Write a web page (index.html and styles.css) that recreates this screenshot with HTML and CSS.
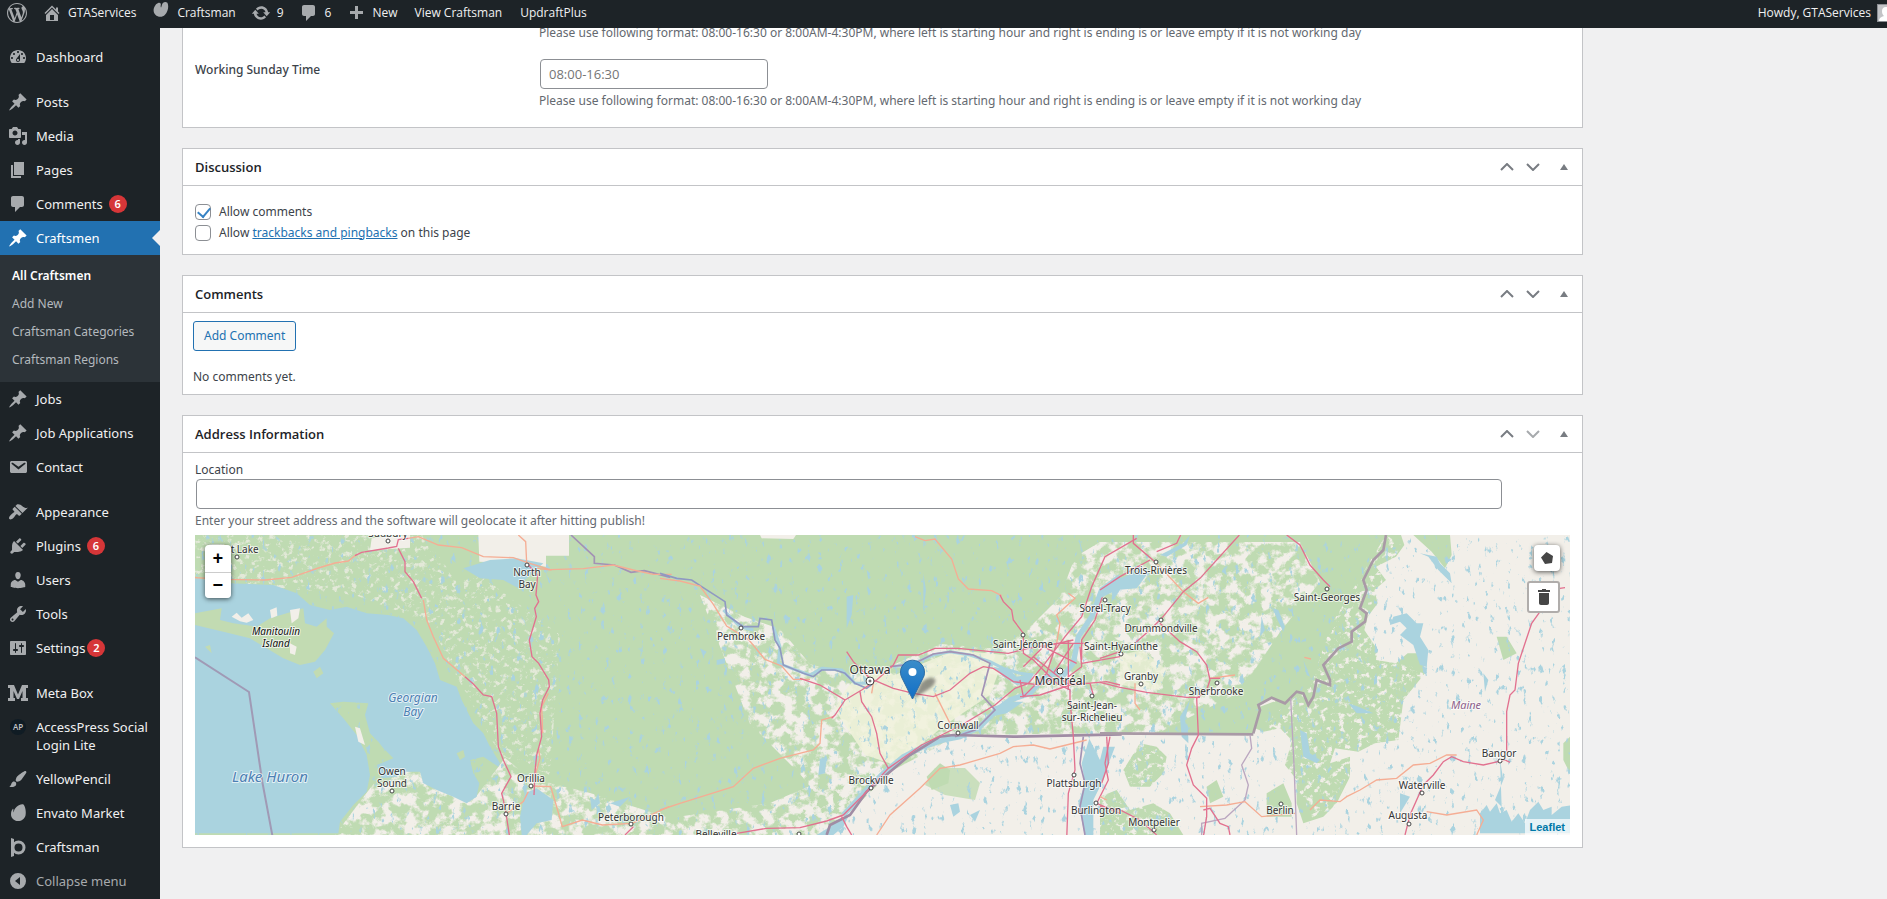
FILE: index.html
```html
<!DOCTYPE html>
<html lang="en">
<head>
<meta charset="utf-8">
<title>Edit Craftsman</title>
<link rel="stylesheet" href="styles.css">
</head>
<body>
<svg class="defs" aria-hidden="true">
  <symbol id="i-wp" viewBox="0 0 20 20"><path d="M20 10c0-5.51-4.49-10-10-10C4.48 0 0 4.49 0 10c0 5.52 4.48 10 10 10 5.51 0 10-4.48 10-10zM7.78 15.37L4.37 6.22c.55-.02 1.17-.08 1.17-.08.5-.06.44-1.13-.06-1.11 0 0-1.45.11-2.37.11-.18 0-.37 0-.58-.01C4.12 2.69 6.87 1.11 10 1.11c2.33 0 4.45.87 6.05 2.34-.68-.11-1.65.39-1.65 1.58 0 .74.45 1.36.9 2.1.35.61.55 1.36.55 2.46 0 1.49-1.4 5-1.4 5l-3.03-8.37c.54-.02.82-.17.82-.17.5-.05.44-1.25-.06-1.22 0 0-1.44.12-2.38.12-.87 0-2.33-.12-2.33-.12-.5-.03-.56 1.2-.06 1.22l.92.08 1.26 3.41zM17.41 10c.24-.64.74-1.87.43-4.25.7 1.29 1.05 2.71 1.05 4.25 0 3.29-1.73 6.24-4.4 7.78.97-2.59 1.94-5.2 2.92-7.78zM6.1 18.09C3.12 16.65 1.11 13.53 1.11 10c0-1.3.23-2.48.72-3.59C3.25 10.3 4.67 14.2 6.1 18.09zm4.03-6.63l2.58 6.98c-.86.29-1.76.45-2.71.45-.79 0-1.57-.11-2.29-.33.81-2.38 1.62-4.74 2.42-7.1z"/></symbol>
  <symbol id="i-home" viewBox="0 0 20 20"><path fill-rule="evenodd" d="M16 8.5l1.53 1.53-1.06 1.06L10 4.6l-6.47 6.49-1.06-1.06L10 2.5l4 4v-2h2v4zm-6-2.46l6 5.99V18H4v-5.97zM12 17v-5H8v5h4z"/></symbol>
  <symbol id="i-swirl" viewBox="0 0 20 20"><path d="M3 4c-3 4-3 9 0 12 3.500 3.500 9 3.300 12 0C19 12 20 5 18 1c-2.500-2-6-1-7 3-.4 1.500-1 3-1 3s-.8-1.300-.3-3C10.200 2 9 .3 7 1 5.500 1.500 4 2.600 3 4z"/></symbol>
  <symbol id="i-update" viewBox="0 0 20 20"><path d="M10.200 3.280c3.530 0 6.430 2.610 6.920 6h2.080l-3.500 4-3.500-4h2.320c-.45-1.970-2.210-3.450-4.320-3.450-1.450 0-2.730.71-3.540 1.780L4.950 5.660C6.230 4.200 8.110 3.280 10.200 3.280zm-.4 13.440c-3.520 0-6.430-2.610-6.920-6H.8l3.500-4c1.170 1.330 2.330 2.670 3.500 4H5.480c.45 1.970 2.210 3.450 4.320 3.450 1.450 0 2.730-.71 3.540-1.780l1.710 1.950c-1.280 1.460-3.150 2.380-5.250 2.380z"/></symbol>
  <symbol id="i-comment" viewBox="0 0 20 20"><path d="M5 2h9c1.100 0 2 .9 2 2v7c0 1.100-.9 2-2 2h-2l-5 5v-5H5c-1.100 0-2-.9-2-2V4c0-1.100.9-2 2-2z"/></symbol>
  <symbol id="i-plus" viewBox="0 0 20 20"><path d="M17 8v3h-5v5H9v-5H4V8h5V3h3v5z"/></symbol>
  <symbol id="i-dash" viewBox="0 0 20 20"><path fill-rule="evenodd" d="M3.760 16h12.480c1.100-1.370 1.760-3.110 1.760-5 0-4.420-3.580-8-8-8s-8 3.580-8 8c0 1.890.66 3.630 1.760 5zM10 4c.55 0 1 .45 1 1s-.45 1-1 1-1-.45-1-1 .45-1 1-1zM6 6c.55 0 1 .45 1 1s-.45 1-1 1-1-.45-1-1 .45-1 1-1zm8 0c.55 0 1 .45 1 1s-.45 1-1 1-1-.45-1-1 .45-1 1-1zm-5.370 5.550L12 7v6c0 1.100-.9 2-2 2s-2-.9-2-2c0-.57.24-1.080.63-1.450zM4 10c.55 0 1 .45 1 1s-.45 1-1 1-1-.45-1-1 .45-1 1-1zm12 0c.55 0 1 .45 1 1s-.45 1-1 1-1-.45-1-1 .45-1 1-1zm-5 3c0-.55-.45-1-1-1s-1 .45-1 1 .45 1 1 1 1-.45 1-1z"/></symbol>
  <symbol id="i-pin" viewBox="0 0 20 20"><path d="M10.440 3.020l1.820-1.820 6.360 6.350-1.830 1.820c-1.050-.68-2.480-.57-3.410.36l-.75.75c-.92.93-1.040 2.350-.35 3.410l-1.830 1.820-2.410-2.410-2.800 2.790c-.42.42-3.380 2.710-3.800 2.290s1.860-3.390 2.280-3.810l2.790-2.790L4.100 9.360l1.830-1.820c1.050.69 2.480.57 3.400-.36l.75-.75c.93-.92 1.050-2.350.36-3.410z"/></symbol>
  <symbol id="i-media" viewBox="0 0 20 20"><path fill-rule="evenodd" d="M13 11V4c0-.55-.45-1-1-1h-1.670L9 1H5L3.670 3H2c-.55 0-1 .45-1 1v7c0 .55.45 1 1 1h10c.55 0 1-.45 1-1zM7 4.500c1.380 0 2.500 1.120 2.500 2.500S8.380 9.500 7 9.500 4.500 8.380 4.500 7 5.620 4.500 7 4.500zM14 6h5v10.500c0 1.380-1.120 2.500-2.500 2.500S14 17.880 14 16.500s1.120-2.500 2.500-2.500c.17 0 .34.02.5.05V9h-3V6zm-4 8.050V13h2v3.500c0 1.380-1.120 2.500-2.500 2.500S7 17.880 7 16.500 8.120 14 9.500 14c.17 0 .34.02.5.05z"/></symbol>
  <symbol id="i-page" viewBox="0 0 20 20"><path d="M6 15V2h10v13H6zm-1 1h8v2H3V5h2v11z"/></symbol>
  <symbol id="i-mail" viewBox="0 0 20 20"><path d="M3.870 4h13.250C18.370 4 19 4.590 19 5.790v8.420c0 1.190-.63 1.790-1.880 1.790H3.870c-1.250 0-1.880-.6-1.880-1.790V5.790c0-1.200.63-1.790 1.880-1.790zm6.620 8.600l6.740-5.530c.24-.2.43-.66.13-1.070-.29-.41-.82-.42-1.170-.17l-5.700 3.860L4.800 5.830c-.35-.25-.88-.24-1.170.17-.3.41-.11.87.13 1.070z"/></symbol>
  <symbol id="i-brush" viewBox="0 0 20 20"><path d="M14.480 11.060L7.410 3.990l1.500-1.500c.5-.56 2.300-.47 3.510.32 1.210.8 1.430 1.280 2.910 2.100 1.180.64 2.450 1.260 4.450.85zm-.71.71L6.700 4.700 4.930 6.470c-.39.39-.39 1.020 0 1.410l1.060 1.060c.39.39.39 1.030 0 1.420-.6.6-1.430 1.110-2.210 1.690-.35.26-.7.53-1.010.84C1.430 14.230.4 16.080 1.400 17.070c.99 1 2.840-.03 4.180-1.360.31-.31.58-.66.85-1.020.57-.78 1.080-1.610 1.690-2.210.39-.39 1.020-.39 1.410 0l1.060 1.060c.39.39 1.020.39 1.410 0z"/></symbol>
  <symbol id="i-plug" viewBox="0 0 20 20"><path d="M13.110 4.360L9.870 7.600 8 5.730l3.240-3.240c.35-.34 1.050-.2 1.560.32.52.51.66 1.210.31 1.550zm-8 1.770l.91-1.120 9.010 9.010-1.190.84c-.71.71-2.630 1.160-3.820 1.160H6.140L4.900 17.260c-.59.59-1.540.59-2.120 0-.59-.58-.59-1.530 0-2.120l1.240-1.240v-3.880c0-1.130.4-3.190 1.090-3.890zm7.260 3.970l3.240-3.240c.34-.35 1.040-.21 1.550.31.52.51.66 1.210.31 1.550l-3.240 3.250z"/></symbol>
  <symbol id="i-user" viewBox="0 0 20 20"><path d="M10 9.250c-2.270 0-2.730-3.440-2.730-3.440C7 4.020 7.820 2 9.970 2c2.160 0 2.980 2.020 2.710 3.810 0 0-.41 3.440-2.680 3.440zm0 2.570L12.720 10c2.390 0 4.520 2.330 4.520 4.530v2.490s-3.650 1.130-7.240 1.130c-3.650 0-7.240-1.130-7.240-1.130v-2.490c0-2.250 1.940-4.480 4.470-4.480z"/></symbol>
  <symbol id="i-tool" viewBox="0 0 20 20"><path fill-rule="evenodd" d="M16.680 9.770c-1.340 1.340-3.300 1.670-4.950.99l-5.410 6.520c-.99.99-2.590.99-3.580 0s-.99-2.590 0-3.570l6.520-5.420c-.68-1.650-.35-3.610.99-4.950 1.280-1.280 3.120-1.620 4.720-1.060l-2.890 2.890 2.820 2.820 2.860-2.870c.53 1.580.18 3.390-1.080 4.650zM3.810 16.210c.4.39 1.040.39 1.430 0 .4-.4.4-1.040 0-1.430-.39-.4-1.030-.4-1.430 0-.39.39-.39 1.030 0 1.430z"/></symbol>
  <symbol id="i-sliders" viewBox="0 0 20 20"><path fill-rule="evenodd" d="M18 16V4c0-.55-.45-1-1-1H3c-.55 0-1 .45-1 1v12c0 .55.45 1 1 1h14c.55 0 1-.45 1-1zM8 11h1c.55 0 1 .45 1 1s-.45 1-1 1H8v1.500c0 .28-.22.5-.5.5s-.5-.22-.5-.5V13H6c-.55 0-1-.45-1-1s.45-1 1-1h1V5.500c0-.28.22-.5.5-.5s.5.22.5.5V11zm5-2h-1c-.55 0-1-.45-1-1s.45-1 1-1h1V5.500c0-.28.22-.5.5-.5s.5.22.5.5V7h1c.55 0 1 .45 1 1s-.45 1-1 1h-1v5.500c0 .28-.22.5-.5.5s-.5-.22-.5-.5V9z"/></symbol>
  <symbol id="i-meta" viewBox="0 0 20 20"><path d="M0 2h6l4 9.500L14 2h6v3h-2v10h2v3h-7v-3h1.500V8L11 16H9L5.500 8v7H7v3H0v-3h2V5H0z"/></symbol>
  <symbol id="i-paint" viewBox="0 0 20 20"><path d="M18.330 3.570s.27-.8-.31-1.360c-.53-.52-1.220-.24-1.220-.24-.61.3-5.760 3.470-7.670 5.570-.86.96-2.060 3.790-1.090 4.820.92.98 3.960-.17 4.790-1 2.060-2.060 5.210-7.170 5.500-7.790zM1.400 17.650c2.370-1.560 1.460-3.410 3.230-4.640.93-.65 2.220-.62 3.080.29.63.67.8 2.570-.16 3.460-1.570 1.450-4 1.550-6.150.89z"/></symbol>
  <symbol id="i-leaf" viewBox="0 0 20 20"><path d="M15.500 1.500c1.500 1.500 3 7 2 11-1 3.600-4 5.600-7.500 5.500-4-.1-7-3-7-6.800 0-2.500.8-4 1.700-5.200.3-.3.8-.1.7.4-.2 1.300-.1 2.400.3 3.200C6 4.500 12 .3 15.500 1.500z"/></symbol>
  <symbol id="i-b" viewBox="0 0 20 20"><path d="M3 1l3 1v17l-3 1z"/><circle cx="10.500" cy="10.500" r="5.500" fill="none" stroke="currentColor" stroke-width="3"/></symbol>
  <symbol id="i-collapse" viewBox="0 0 20 20"><path fill-rule="evenodd" d="M10 2a8 8 0 1 0 0 16 8 8 0 0 0 0-16zm2 4v8l-5-4z"/></symbol>
  <symbol id="i-up" viewBox="0 0 14 8"><path d="M1 7l6-6 6 6" fill="none" stroke="currentColor" stroke-width="2"/></symbol>
  <symbol id="i-down" viewBox="0 0 14 8"><path d="M1 1l6 6 6-6" fill="none" stroke="currentColor" stroke-width="2"/></symbol>
  <symbol id="i-tri" viewBox="0 0 8 6"><path d="M4 0l4 6H0z"/></symbol>
  <symbol id="i-penta" viewBox="0 0 12 12"><path d="M5.500 0L12 4l-1 7-7 1L0 5.500z"/></symbol>
  <symbol id="i-trash" viewBox="0 0 12 16"><path d="M4 0h4v1h4v2H0V1h4zM1 4h10v10c0 1.200-.8 2-2 2H3c-1.200 0-2-.8-2-2z"/></symbol>
</svg>

<header class="bar">
  <nav class="bar-left" aria-label="Toolbar">
    <a class="bar-item" href="#" aria-label="About WordPress"><svg class="icon"><use href="#i-wp"/></svg></a>
    <a class="bar-item" href="#"><svg class="icon"><use href="#i-home"/></svg>GTAServices</a>
    <a class="bar-item" href="#"><svg class="icon raised"><use href="#i-swirl"/></svg>Craftsman</a>
    <a class="bar-item" href="#"><svg class="icon"><use href="#i-update"/></svg>9</a>
    <a class="bar-item" href="#"><svg class="icon"><use href="#i-comment"/></svg>6</a>
    <a class="bar-item" href="#"><svg class="icon"><use href="#i-plus"/></svg>New</a>
    <a class="bar-item plain" href="#">View Craftsman</a>
    <a class="bar-item plain" href="#">UpdraftPlus</a>
  </nav>
  <a class="howdy" href="#">Howdy, GTAServices
    <span class="avatar"><svg viewBox="0 0 16 16" width="16" height="16"><path d="M8 2c3 0 4 2 4 4 0 3-1 4-2 5 3 1 5 2 5 5H1c0-3 2-4 5-5-1-1-2-2-2-5 0-2 1-4 4-4z" fill="#fff"/></svg></span>
  </a>
</header>

<div class="page">
  <nav class="menu" aria-label="Main menu">
    <a href="#"><svg class="icon"><use href="#i-dash"/></svg><span>Dashboard</span></a>
    <a class="gap" href="#"><svg class="icon"><use href="#i-pin"/></svg><span>Posts</span></a>
    <a href="#"><svg class="icon"><use href="#i-media"/></svg><span>Media</span></a>
    <a href="#"><svg class="icon"><use href="#i-page"/></svg><span>Pages</span></a>
    <a href="#"><svg class="icon"><use href="#i-comment"/></svg><span>Comments</span><b class="count">6</b></a>
    <a class="current" href="#"><svg class="icon"><use href="#i-pin"/></svg><span>Craftsmen</span></a>
    <div class="submenu">
      <a class="active" href="#">All Craftsmen</a>
      <a href="#">Add New</a>
      <a href="#">Craftsman Categories</a>
      <a href="#">Craftsman Regions</a>
    </div>
    <a href="#"><svg class="icon"><use href="#i-pin"/></svg><span>Jobs</span></a>
    <a href="#"><svg class="icon"><use href="#i-pin"/></svg><span>Job Applications</span></a>
    <a href="#"><svg class="icon"><use href="#i-mail"/></svg><span>Contact</span></a>
    <a class="gap" href="#"><svg class="icon"><use href="#i-brush"/></svg><span>Appearance</span></a>
    <a href="#"><svg class="icon"><use href="#i-plug"/></svg><span>Plugins</span><b class="count">6</b></a>
    <a href="#"><svg class="icon"><use href="#i-user"/></svg><span>Users</span></a>
    <a href="#"><svg class="icon"><use href="#i-tool"/></svg><span>Tools</span></a>
    <a href="#"><svg class="icon"><use href="#i-sliders"/></svg><span>Settings</span><b class="count close">2</b></a>
    <a class="gap" href="#"><svg class="icon"><use href="#i-meta"/></svg><span>Meta Box</span></a>
    <a href="#"><i class="ap">AP</i><span>AccessPress Social Login Lite</span></a>
    <a href="#"><svg class="icon"><use href="#i-paint"/></svg><span>YellowPencil</span></a>
    <a href="#"><svg class="icon"><use href="#i-leaf"/></svg><span>Envato Market</span></a>
    <a href="#"><svg class="icon"><use href="#i-b"/></svg><span>Craftsman</span></a>
    <button class="collapse" type="button"><svg class="icon"><use href="#i-collapse"/></svg><span>Collapse menu</span></button>
  </nav>

  <main class="content">
    <section class="box hours">
      <p class="hint">Please use following format: 08:00-16:30 or 8:00AM-4:30PM, where left is starting hour and right is ending is or leave empty if it is not working day</p>
      <label class="field-label" for="sunday">Working Sunday Time</label>
      <div class="field">
        <input class="text short" id="sunday" type="text" placeholder="08:00-16:30">
        <p class="hint">Please use following format: 08:00-16:30 or 8:00AM-4:30PM, where left is starting hour and right is ending is or leave empty if it is not working day</p>
      </div>
    </section>

    <section class="box">
      <div class="box-head"><h2>Discussion</h2><div class="handles">
        <button type="button" aria-label="Move up"><svg class="chev"><use href="#i-up"/></svg></button>
        <button type="button" aria-label="Move down"><svg class="chev"><use href="#i-down"/></svg></button>
        <button class="toggle" type="button" aria-label="Toggle panel"><svg class="tri"><use href="#i-tri"/></svg></button></div></div>
      <div class="discussion">
        <div class="check"><input type="checkbox" id="c1" checked><label for="c1">Allow comments</label></div>
        <div class="check"><input type="checkbox" id="c2"><label for="c2">Allow <a href="#">trackbacks and pingbacks</a> on this page</label></div>
      </div>
    </section>

    <section class="box">
      <div class="box-head"><h2>Comments</h2><div class="handles">
        <button type="button" aria-label="Move up"><svg class="chev"><use href="#i-up"/></svg></button>
        <button type="button" aria-label="Move down"><svg class="chev"><use href="#i-down"/></svg></button>
        <button class="toggle" type="button" aria-label="Toggle panel"><svg class="tri"><use href="#i-tri"/></svg></button></div></div>
      <div class="comments">
        <button class="add" type="button">Add Comment</button>
        <p>No comments yet.</p>
      </div>
    </section>

    <section class="box">
      <div class="box-head"><h2>Address Information</h2><div class="handles">
        <button type="button" aria-label="Move up"><svg class="chev"><use href="#i-up"/></svg></button>
        <button type="button" aria-label="Move down" disabled><svg class="chev"><use href="#i-down"/></svg></button>
        <button class="toggle" type="button" aria-label="Toggle panel"><svg class="tri"><use href="#i-tri"/></svg></button></div></div>
      <div class="address">
        <label for="loc">Location</label>
        <input class="text long" id="loc" type="text">
        <p class="hint">Enter your street address and the software will geolocate it after hitting publish!</p>
        <div class="map">
          <svg class="map-canvas" viewBox="0 0 1375 300" preserveAspectRatio="xMidYMid slice" role="img" aria-label="Map of eastern Ontario, southern Quebec and Maine">
            <defs>
              <filter id="cream" x="0" y="0" width="100%" height="100%" color-interpolation-filters="sRGB"><feTurbulence type="fractalNoise" baseFrequency=".09 .1" numOctaves="6" seed="4"/><feColorMatrix values="0 0 0 0 .949  0 0 0 0 .937  0 0 0 0 .914  6 0 0 0 -2.600"/></filter>
              <filter id="light" x="0" y="0" width="100%" height="100%" color-interpolation-filters="sRGB"><feTurbulence type="fractalNoise" baseFrequency=".16 .18" numOctaves="5" seed="9"/><feColorMatrix values="0 0 0 0 .949  0 0 0 0 .937  0 0 0 0 .914  6 0 0 0 -3.300"/></filter>
              <filter id="water" x="0" y="0" width="100%" height="100%" color-interpolation-filters="sRGB"><feTurbulence type="fractalNoise" baseFrequency=".18 .1" numOctaves="4" seed="33"/><feColorMatrix values="0 0 0 0 .667  0 0 0 0 .827  0 0 0 0 .875  9 0 0 0 -5.900"/></filter>
              <clipPath id="valley"><path d="M505 60l45 22 35 12 30 35 35 10 50-10 45-20 60 5 30-22 30-30 15-40 25-15 200 0 20 40-40 50-40 60-80 40 10 35-30 30H770l-75 40-50 57H480l-10-20 60-25 50-20 45-30-20-25-50-50z"/></clipPath>
              <clipPath id="south"><path d="M140 300l30-40 20-26 40 4 50 25 30-40 25 20 60 15 80 25 100-15 70-30 60 0-60 62z"/></clipPath>
              <clipPath id="greens"><path d="M905 200l70 0 10 50-20 50-70 0zM1191 0l15 10-30 60 20 50 70 40-30 50-50 10-60 80-30-60-30-50 50-40 20-60z"/></clipPath>
              <clipPath id="north"><path d="M0 0h230l40 60-30 30-80-30L0 45zM225 60l60-20 80 60-10 140-50-20-55-100z"/></clipPath>
            </defs>
            <rect width="1375" height="300" fill="#bfdbb2"/>
            <g clip-path="url(#north)" opacity=".7"><rect width="1375" height="300" filter="url(#light)"/></g>
            <g clip-path="url(#valley)"><rect width="1375" height="300" filter="url(#cream)"/></g>
            <g clip-path="url(#south)"><rect width="1375" height="300" filter="url(#cream)"/></g>
            <path d="M640 175q20-50 60-35l60-25 50 5-15 40-45 30-50 40-30-10z" fill="#f1f2dc" opacity=".85"/>
            <path d="M925 120l22-5 25 20-8 20-39-5z" fill="#f1f2dc" opacity=".7"/>

            <g transform="translate(905 -5) scale(.333333)">
              <path d="M858 15l-8 45-30 30-30 60 10 30-20 55 20 15-5 25-40 30v30l-40 20-45 50 20 45v15l-40-15-10 50-15 25-15-35-20-5-35 35-40-17-40 22 5 15-20 70H0L-420 615L-620 720L-760 855L-820 920H1425V15z" fill="#f2efe9"/>
              <path d="M858 15h45l10 30-25 35-60 30 30 40-35 30 10 40-30 40-10 40 40 60-5 30 60 10 35-30 40 0 12 60-65 80-15 120-70 10-50 25-70-10-20 60-40 30-50 10-40-50 20-70-20-60-30-60 40-100 55-60 40-20v-30l40-30 5-25-20-15 20-55-10-30 30-60 30-30z" fill="#bfdbb2"/>
              <path d="M480 530l40-15 50 10v100l-30-30-50 10-25-10zM590 690l60-20 40 30 60-20v60l-40 80-40 40-60 20-20-60zM500 790l50-30 25 60v40h-75zM940 15h110l5 60-20 40-40-50zM1190 320l30 0 30 50-40 20zM1410 620l-20 20 0 50 20 40zM120 640l50 10 30 30-10 50-40 40-60 0-20-50zM0 800l50-20 40 60 70-20 50 30 40 65H0zM320 770l30-20 20 50-40 20z" fill="#bfdbb2"/>
            </g>
            <g clip-path="url(#greens)"><rect width="1375" height="300" filter="url(#light)"/></g>
            <path d="M730 250l10-17 30 0 15 15-5 17-30-5z" fill="#bfdbb2" opacity=".8"/>
            <rect width="1375" height="300" filter="url(#water)"/>

            <g transform="translate(-5 -5) scale(.333333)">
              <path d="M865 15h272v62h-69v33l-70-10-130-5zM545 25l115-10v38l-120 8z" fill="#f2efe9"/>
              <path d="M15 145l105 15 130 5 70 25 40 35 60 15 50-10 60 20 65 5 45 10 40 35 30 50 25 50 15 50 50 20 15 40 35 70 30 30 20 40 30 50-5 10-45-30-40 10 10 40 18 30-8 40-30 20-40-20-50-20-40-20-10-35-50 0-20 15-45 5-15-40 50-20-30-30-15-20-25-25-15-55 10-35-75-5-40 5 40 45 40 50 30 60 10 60-10 50-40 40-40 50-5 35H15z" fill="#aad3df"/>
              <path d="M15 250l80-15-5 35 40 10 70 10 40-25 50-15 50-15 5 45 35 10 30-25v25l22 20-27 50-30 35-45 10-50-20-50-30-50-30-80-20-85-20zM370 425l20-15 10 20-20 15zM800 670l20-10 5 20-15 10zM45 350l15-5 5 25z" fill="#c2dbb2"/>
              <path d="M125 260l15-12 15 15 20-13 15 20-20 8-20-4zM240 240l20-8 2 25-18 8zM300 240l30-5-5 30-20 15zM300 340l20 10-5 25-15-5zM495 590l15 5 15 50-20-10z" fill="#f2efe9"/>
              <path d="M820 115l80-25 80-5 80 15-55 50-20 25-45-25-70-5zM1005 790l35-15 50 35-5 60-45 10-30 35h-15l-5-55zM1200 800l15 10 10-20 5 30-25 20zM1260 820l60-20-30 30z" fill="#aad3df"/>
              <path d="M15 382l162 104 40 270 30 160" fill="none" stroke="#a09ab5" stroke-width="6"/>
              <path d="M1143 15l70 65 0 20 60 5 50 22 40-5 78 20" fill="none" stroke="#a392b5" stroke-width="5"/>
              <g class="trunk"><path d="M15 143l90 5 120 2 80-8 80-28 50-15 40-6 25-20M655 25l30-5 60 25 70 8 65 27 90 3 40 14 70 22 100-3 90-11 60 15 60 13 55 0M700 210l10 60 20 50 30 65 65 55M985 15l22 20 3 65M1040 115l45 5M1075 490l-20 40 3 80M1045 655l5 30-20 70M1022 768l60 2 15 50 20 70 60-20 60 15 90-5 110-50M1015 785l-15 30-50 35"/></g>
              <g class="road"><path d="M495 77l20-10 80-13 25-5 5-20 30-4M625 55l20 40v30l25 30 25 50M825 440l25 22 30 33 25 5 15 50 5 100 15 40 23 50-28 50 5 20 8 40 10 65M1015 105l28 30-5 60 8 20-12 20 5 25-15 50-6 20 8 50 20 20 30 50 2 20-20 40-8 40 5 70-15 55-5 50-3 70M1305 915l25-25"/></g>
            </g>
            <g transform="translate(465 -5) scale(.333333)">
              <path d="M300 15h108l-8 12-95-2z" fill="#f2efe9"/>
              <path d="M190 240l50 50 40 10M340 290l20 60-5 50 40 15 55 20 35-20 60 5 40 40 40 0M700 410l60-10 60-25 50-10 60 10 60 20 40 20 50 15 40 5" class="creek"/>
              <path d="M550 855l60-65 60-60 60-50 60-30 60-20 50-10 60-30 50-50 40-30 60-20 40-45 50-20M1190 460l50-60 15-80 40-60 30-80 55-40" class="river"/>
              <path d="M1000 410l50 10 20 20 50-10-10 30-40 5-40-25zM1000 530l50-15 40 0-50 35-50 10zM510 890l60-40-20 40-30 25h-50zM1270 590l20 30-25 80 10 60-20 60 20 100h25l0-110 30-60 20-60 15-40h-35l-10 40zM1350 160l30-20v40l-20 30z" fill="#aad3df"/>
              <g fill="#aad3df"><path d="M120 355l20 10-10 15zM170 390l25-5 0 15-25 5zM560 200l20-5-5 60-15 40zM620 120l10 10-5 20zM790 130l8 50-8 70zM480 690l20-10-5 50-20 5zM870 825l25-5 5 25-20 15zM930 855l30-15-15 35z"/></g>
              <path d="M0 130l50 15 45 5 30 20 70 45 5 40 50 35 45 0 5-25 35 5 10 60 15 25 10 50 60 25 30 10 25-20 40 0 30 10 30 30 35 15 20-15" fill="none" stroke="#8f99c2" stroke-width="5"/>
              <path d="M690 410l70-8 60-30 50-7 70 10 50 25-25 95 40 45-60 60-60 20M1270 620l-10 80 15 60-15 70 15 85" fill="none" stroke="#a392b5" stroke-width="5"/>
              <path d="M500 915l10-30 60-30 50-70 70-60 60-50 90-55 40-5 180 5 325-7" fill="none" stroke="#a08ca4" stroke-width="8"/>
              <path d="M800 740l40-40 30 20-5 40-50 20z" fill="#bfdbb2"/>
              <g class="trunk"><path d="M0 145l60 8 60 15 40 55 40 65 65 40 50 60 50 20 35 40h50M520 560l-35 10-5 70-20 20-100 25-80 30-60 55-160 50-60 20M640 460l-5 30M765 20l30 12 30-5 50 60 20 60 30 30 70 5 30 15M825 490l45 90M650 915l40-60 90-80 60-60 60-10 120-35 40-20 60-5 50 12 110-27M1190 340l10-60-10-25 55-50-20-15"/></g>
              <g class="road"><path d="M420 445l60 20 75 45-30 45-10 10M555 510l50-30 45-30 50-45 15-30 60 0 50-20h70l150 15 60-15 85-15h90M560 365l20 30 50 50 70 30 60 15 60 10 50-20 60-50 40-20 30 5 60 40 80 10 40-20M600 485l5 30 30 45 15 50 10 60 25 45M550 855l60-60 75-80 100-70 120-60 100-60 60-50 40-15 50-60 60-80 50-60 30-90 40-90 95-55M230 910l90-15 100-2 80-20 50-18M545 860l15 30 15 25M1020 195l10 20 25 25 5 30 30 40M1090 320l0 50 30 20 70 70 40 20 0 30 10 110 5 100-20 70-5 140M1090 410l60-60 90-20M1120 380l100 80 60 0 60-5 40 10M1150 350l100 50M1180 430l60-90M1225 330v150M1260 350l5 60-40 30M1080 500l60-5 90-30 50-5M1080 450l10 50 70-70 30-90M1265 400l115-20M1265 390l0-60 40-60 25-80M1290 460l10 35M1350 620l-15 80 10 50-35 70 70 30"/></g>
            </g>
            <g transform="translate(905 -5) scale(.333333)">
              <path d="M50 150l70-30 20 15-30 40-60 5-50 25v-20zM180 75l70-35 20-25-10 30-60 35zM245 620l-5-60 30-50-15 60 10 50v20zM520 235l15 5 20 50-5 15-20-40zM485 260l10 40-15 20zM610 390l20 50-10-5zM745 520l30 10 45 20-50 0zM880 260l40-10 30 30 20 0-10 40 25 40-5 50-20-5-20-60-40-30 20-20-20-20-30 10zM960 70l25 10 30 40 40 40-5-30-30-30-10-20zM600 600l20 10 10 60 30 20-10 10-40-20zM1140 850l20-25 10 20 20-25 10 30 20-10 15 35 20-25 20 30 15-40 25-25 15 25 25-10 0 25 30-25 40-5v85h-285zM1200 690l10 60-25 60 20 20zM1150 430l15 20-10 35zM900 790l30 10-30 50z" fill="#aad3df"/>
              <path d="M0 610l460 3M858 15l-8 45-30 30-30 60 10 30-20 55 20 15-5 25-40 30v30l-40 20-45 50 20 45v15l-40-15-10 50-15 25-15-35-20-5-35 35-40-17-40 22 5 15-20 70" fill="none" stroke="#a99aa6" stroke-width="8"/>
              <path d="M572 505l10 200 8 210M450 615l5 40-30 50 20 60-10 45-60 55-70 15v35" fill="none" stroke="#bba7c0" stroke-width="4"/>
              <g class="trunk"><path d="M170 100l80 85 45 35 30-18M105 460v60l15 20M330 445l75-10M613 382l20 5M0 800l20 10M300 830l80-5 55-10 50 45 100-10M630 840l30-30 60 5 20-15 40-20 50-30 60-5 50-40 50-5 50-25h30M980 845l60 10 90-15 20 30-20 45"/></g>
              <g class="road"><path d="M0 180l60-40 90-50M100 15v25l70 60M170 65l60-25 12-25M418 15l-118 130-50 40-65 80-30 30-50 45M180 280l60 55 50 30 30 40 10 45-10 30-30 25 5 110-20 40-15 50 20 60 40 40 0 55-10 60M0 385l60-20M0 457l60 15 80 15 120 15 40 0M560 15l40 30 30 60 40 45 20 20M330 445h30M20 620l5 80-20 60M0 830l60 10 60 30 50 45M310 840l20-5 30 45 25 10 5 25M915 915l15-60 40-90 30-30 30-40 25-15 35 15 60 10 65-15 15 7M1220 665v-120l10-50 15-15 10-80 20-60 20-60 25-35 60-70 15-2"/></g>
            </g>

            <g class="dots">
              <circle cx="42" cy="22" r="2"/><circle cx="193" cy="6" r="2"/><circle cx="332" cy="30" r="2"/><circle cx="197" cy="256" r="2"/><circle cx="336" cy="251" r="2"/><circle cx="311" cy="279" r="2"/><circle cx="436" cy="289" r="2"/><circle cx="546" cy="93" r="2"/><circle cx="604" cy="299" r="2"/><circle cx="676" cy="253" r="2"/><circle cx="763" cy="198" r="2"/><circle cx="828" cy="100" r="2"/><circle cx="865" cy="136" r="3"/><circle cx="897" cy="161" r="2"/><circle cx="879" cy="240" r="2"/><circle cx="901" cy="268" r="2"/><circle cx="910" cy="65" r="2"/><circle cx="926" cy="119" r="2"/><circle cx="961" cy="27" r="2"/><circle cx="966" cy="85" r="2"/><circle cx="946" cy="149" r="2"/><circle cx="1022" cy="148" r="2"/><circle cx="1132" cy="54" r="2"/><circle cx="1305" cy="226" r="2"/><circle cx="1227" cy="258" r="2"/><circle cx="1214" cy="289" r="2"/><circle cx="1086" cy="269" r="2"/><circle cx="959" cy="295" r="2"/><circle cx="675" cy="146" r="4"/><circle cx="675" cy="146" r="1"/>
            </g>
            <g class="names">
              <text x="40" y="18">Elliot Lake</text><text x="193" y="2">Sudbury</text>
              <text x="332" y="41">North</text><text x="332" y="53">Bay</text>
              <text x="197" y="240">Owen</text><text x="197" y="252">Sound</text>
              <text x="336" y="247">Orillia</text><text x="311" y="275">Barrie</text><text x="436" y="286">Peterborough</text>
              <text x="546" y="105">Pembroke</text><text class="city" x="675" y="139">Ottawa</text>
              <text x="828" y="113">Saint-Jérôme</text><text class="city" x="865" y="150">Montréal</text>
              <text x="763" y="194">Cornwall</text><text x="676" y="249">Brockville</text><text x="521" y="303">Belleville</text>
              <text x="879" y="252">Plattsburgh</text><text x="901" y="279">Burlington</text>
              <text x="897" y="174">Saint-Jean-</text><text x="897" y="186">sur-Richelieu</text>
              <text x="910" y="77">Sorel-Tracy</text><text x="926" y="115">Saint-Hyacinthe</text>
              <text x="961" y="39">Trois-Rivières</text><text x="1132" y="66">Saint-Georges</text><text x="966" y="97">Drummondville</text>
              <text x="946" y="145">Granby</text><text x="1021" y="160">Sherbrooke</text>
              <text x="1304" y="222">Bangor</text><text x="1227" y="254">Waterville</text><text x="1213" y="284">Augusta</text>
              <text x="1085" y="279">Berlin</text><text x="959" y="291">Montpelier</text>
              <text class="island" x="81" y="100">Manitoulin</text><text class="island" x="81" y="112">Island</text>
              <text class="bay" x="218" y="167">Georgian</text><text class="bay" x="218" y="181">Bay</text>
              <text class="lake" x="75" y="247">Lake Huron</text><text class="state" x="1271" y="174">Maine</text>
            </g>
            <defs>
              <linearGradient id="pin" x2="0" y2="1"><stop offset="0" stop-color="#3a8cc9"/><stop offset="1" stop-color="#126fc6"/></linearGradient>
              <filter id="soft" x="-20%" y="-20%" width="140%" height="140%"><feGaussianBlur stdDeviation="1.500"/></filter>
            </defs>
            <path d="M718 164l8-16q8-8 14-4 2 4-6 10z" fill="#333" opacity=".5" filter="url(#soft)"/>
            <path d="M717.500 164L707 143a12 12 0 1 1 21 0z" fill="url(#pin)" stroke="#2e6da4"/>
            <circle cx="717.500" cy="137" r="4" fill="#fff"/>
          </svg>
          <div class="zoom"><button type="button" aria-label="Zoom in">+</button><button type="button" aria-label="Zoom out">−</button></div>
          <div class="tools">
            <button class="poly" type="button" aria-label="Draw a polygon"><svg width="12" height="12"><use href="#i-penta"/></svg></button>
            <button class="trash" type="button" aria-label="Delete layers"><svg width="12" height="16"><use href="#i-trash"/></svg></button>
          </div>
          <a class="credit" href="#">Leaflet</a>
        </div>
      </div>
    </section>
  </main>
</div>
</body>
</html>
```
FILE: styles.css
```css
* { box-sizing: border-box; }
body {
  margin: 0;
  height: 100vh;
  overflow: hidden;
  display: flex;
  flex-direction: column;
  background: #f0f0f1;
  color: #3c434a;
  font: 12px/18px "Noto Sans", "Open Sans", sans-serif;
}
p, h2 { margin: 0; }
a { color: #2271b1; }
button { font: inherit; cursor: pointer; }
.defs { position: absolute; width: 0; height: 0; }
.icon { width: 20px; height: 20px; flex: none; fill: currentColor; }

/* Toolbar */
.bar {
  position: relative;
  z-index: 2;
  flex: none;
  display: flex;
  justify-content: space-between;
  height: 28px;
  padding-bottom: 3px;
  overflow: hidden;
  background: #1d2327;
  font-family: "Open Sans", sans-serif;
}
.bar-left { display: flex; }
.bar-item, .howdy {
  display: flex;
  align-items: center;
  gap: 6px;
  padding: 0 8px 0 7px;
  color: #f0f0f1;
  text-decoration: none;
  white-space: nowrap;
}
.bar-item.plain { padding: 0 9px; }
.bar-item .icon { color: #a7aaad; }
.bar-item .raised { width: 16px; height: 16px; margin: 0 2px 6px; }
.howdy { padding: 0; margin-right: -8px; }
.avatar { display: flex; width: 18px; height: 18px; border: 1px solid #8c8f94; background: #c3c4c7; }

.page { flex: 1; display: flex; min-height: 0; }

/* Side menu */
.menu {
  flex: none;
  width: 160px;
  padding-top: 12px;
  background: #1d2327;
  font-size: 13px;
}
.menu > a, .collapse {
  position: relative;
  display: flex;
  width: 100%;
  padding: 8px 0;
  border: 0;
  background: none;
  color: #f0f0f1;
  text-align: left;
  text-decoration: none;
}
.menu > a > .icon, .collapse > .icon { margin: -1px 8px; color: #a7aaad; }
.menu > .gap { margin-top: 11px; }
.menu > .current { background: #2271b1; color: #fff; }
.menu > .current > .icon { color: #fff; }
.menu > .current::after {
  content: "";
  position: absolute;
  right: 0;
  top: 9px;
  border: 8px solid transparent;
  border-left: 0;
  border-right-color: #f0f0f1;
}
.menu > .collapse { color: #a7aaad; }
.count {
  width: 18px;
  height: 18px;
  margin-left: 6px;
  border-radius: 9px;
  background: #d63638;
  color: #fff;
  font-size: 11px;
  font-weight: 600;
  text-align: center;
}
.count.close { margin-left: 2px; }
.ap {
  flex: none;
  width: 16px;
  height: 16px;
  margin: 1px 10px;
  border-radius: 50%;
  background: #101c24;
  color: #c3c4c7;
  font: 600 8px/16px "Open Sans", sans-serif;
  text-align: center;
}
.submenu { padding: 7px 0 8px; background: #2c3338; font-size: 12px; }
.submenu a { display: block; padding: 5px 12px; color: #b4b9be; text-decoration: none; }
.submenu .active { color: #fff; font-weight: 600; }

/* Content */
.content {
  flex: 1;
  display: flex;
  flex-direction: column;
  gap: 20px;
  margin: -4px 304px 0 22px;
}
.box { border: 1px solid #c3c4c7; background: #fff; }
.hours {
  display: grid;
  grid-template-columns: 344px 1fr;
  row-gap: 17px;
  padding: 0 12px 17px;
  border-top: 0;
}
.hours > .hint { grid-column: 2; }
.field-label { line-height: 22px; font-weight: 500; }
.hint { color: #646970; }
.text {
  display: block;
  height: 30px;
  padding: 0 8px;
  border: 1px solid #8c8f94;
  border-radius: 4px;
  background: #fff;
  font: 13px/18px "Open Sans", sans-serif;
}
.text::placeholder { color: #757575; }
.short { width: 228px; margin-left: 1px; }
.field .hint, .address .hint { margin-top: 3px; }

.box-head {
  display: flex;
  align-items: center;
  justify-content: space-between;
  height: 37px;
  padding: 0 14px 0 12px;
  border-bottom: 1px solid #c3c4c7;
}
.box-head h2 { color: #1d2327; font: 600 13px/18px "Open Sans", sans-serif; }
.handles { display: flex; gap: 12px; }
.handles button { display: flex; align-items: center; padding: 0; border: 0; background: none; color: #787c82; }
.handles button:disabled { color: #a7aaad; }
.handles .toggle { margin-left: 8px; }
.chev { width: 14px; height: 8px; }
.tri { width: 8px; height: 6px; fill: currentColor; }

.discussion { padding: 15px 12px 11px; }
.check { display: flex; align-items: center; gap: 8px; height: 21px; }
.check input {
  appearance: none;
  width: 16px;
  height: 16px;
  margin: 0;
  border: 1px solid #8c8f94;
  border-radius: 4px;
  background: #fff;
}
.check input:checked::before {
  content: "";
  display: block;
  width: 6px;
  height: 10px;
  margin: 0 0 0 4px;
  border: solid #3582c4;
  border-width: 0 2px 2px 0;
  transform: rotate(40deg);
}

.comments { padding: 8px 10px; }
.add {
  display: block;
  height: 30px;
  margin-bottom: 17px;
  padding: 0 10px;
  border: 1px solid #2271b1;
  border-radius: 3px;
  background: #f6f7f7;
  color: #2271b1;
  font-size: 13px;
  font-size: 12px;
}

.address { padding: 8px 12px 12px; }
.address label { display: block; }
.long { width: 95%; margin-left: 1px; }

/* Map */
.map { position: relative; height: 300px; margin-top: 5px; overflow: hidden; background: #bfdbb2; }
.map-canvas { display: block; width: 100%; height: 100%; }
.road path { fill: none; stroke: #e2718f; stroke-width: 4; }
.trunk path { fill: none; stroke: #f5ad94; stroke-width: 4; }
.river { fill: none; stroke: #aad3df; stroke-width: 16; }
.creek { fill: none; stroke: #aad3df; stroke-width: 9; }
.dots circle { fill: #fff; stroke: #444; stroke-width: 1; }
.names text {
  fill: #333;
  stroke: #ffffffb0;
  stroke-width: 2px;
  stroke-linejoin: round;
  paint-order: stroke;
  font: 10px "Noto Sans", sans-serif;
  text-anchor: middle;
}
.names .city { font-size: 12px; }
.names .island { fill: #111; font-style: italic; }
.names .bay { fill: #4d80b3; font-size: 12px; font-style: italic; }
.names .lake { fill: #4d80b3; font-size: 15px; font-style: italic; }
.names .state { fill: #8d618b; font-size: 11px; font-style: italic; }
.zoom {
  position: absolute;
  left: 10px;
  top: 10px;
  width: 26px;
  border-radius: 4px;
  box-shadow: 0 1px 5px #000000a6;
}
.zoom button {
  display: block;
  width: 26px;
  height: 27px;
  padding: 0;
  border: 0;
  border-radius: 4px 4px 0 0;
  background: #fff;
  color: #000;
  font: bold 18px/26px "Liberation Mono", monospace;
}
.zoom button + button { height: 26px; border-top: 1px solid #ccc; border-radius: 0 0 4px 4px; }
.tools {
  position: absolute;
  right: 10px;
  top: 10px;
  display: flex;
  flex-direction: column;
  align-items: flex-end;
  gap: 10px;
}
.tools button { display: flex; align-items: center; justify-content: center; padding: 0; background: #fff; border-radius: 4px; }
.tools svg { fill: #464646; }
.poly { width: 26px; height: 26px; border: 0; box-shadow: 0 1px 5px #000000a6; }
.tools .trash { width: 33px; height: 32px; border: 2px solid #b0adab; border-radius: 3px; }
.credit {
  position: absolute;
  right: 0;
  bottom: 0;
  padding: 0 5px;
  background: #ffffffb3;
  color: #0078a8;
  font: bold 11px/16px "Liberation Sans", sans-serif;
  text-decoration: none;
}
```
